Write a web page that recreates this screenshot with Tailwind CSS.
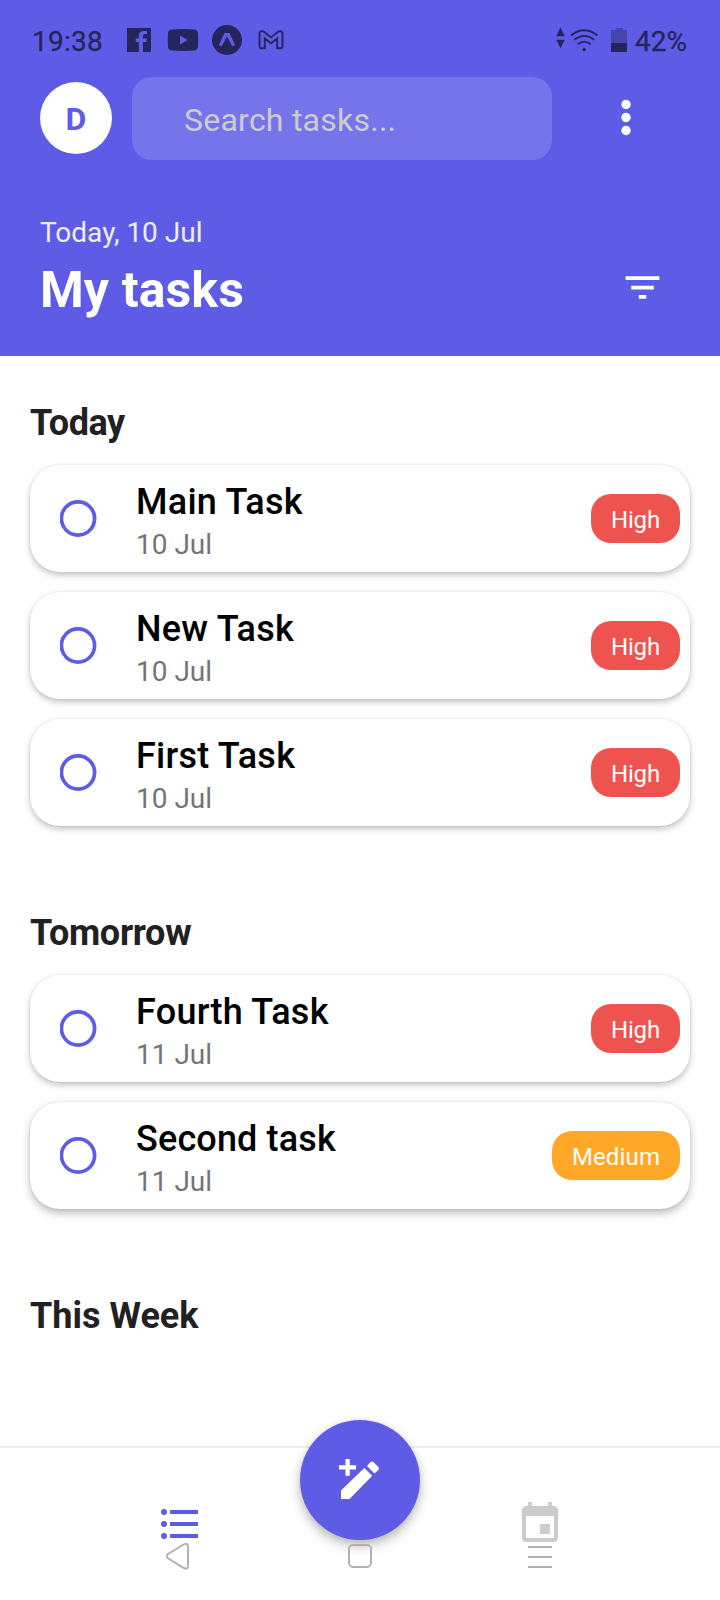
<!DOCTYPE html>
<html lang="en">
<head>
<meta charset="utf-8">
<title>My tasks</title>
<script src="https://cdn.jsdelivr.net/npm/@tailwindcss/browser@4"></script>
</head>
<body class="bg-white font-['Roboto',sans-serif]">
<svg class="hidden"><symbol id="ring" viewBox="0 0 37 37"><circle cx="18" cy="18.500" r="16.600" fill="none" stroke="#5e5ce6" stroke-width="3.700"/></symbol></svg>
<div class="relative flex h-[1600px] w-[720px] flex-col overflow-hidden bg-white">
  <header class="flex h-[356px] shrink-0 flex-col bg-[#5e5ce6]">
    <div class="flex h-[77px] shrink-0 items-start justify-between pt-[25px] pr-[33px] pl-[32px] text-[28px] leading-[33px] text-[#26245c]">
      <div class="flex items-start">
        <span class="w-[95px] tracking-[0.25px] [-webkit-text-stroke:0.3px_#26245c]">19:38</span>
        <svg class="mt-[-2px]" width="160" height="34" viewBox="127 23 160 34" fill="#26245c">
          <path d="M127 28h24v24h-8v-10h3.400l.6-3.600h-4v-2.300c0-1.400.7-2 2-2h2v-3h-3c-3.500 0-5.200 1.900-5.200 4.800v2.500h-3v3.600h3v10h-11.800z"/>
          <path fill-rule="evenodd" d="M172 29.400q11-.8 22 0q4 .3 4 4q.5 6.600 0 13.200q-.2 3.700-4 4q-11 .8-22 0q-3.800-.3-4-4q-.5-6.600 0-13.200q.2-3.700 4-4zM180 35.500v9l7.500-4.500z"/>
          <circle cx="227" cy="40" r="15"/>
          <path d="M224.500 33h5l5.500 12-2.500 1.500c-2-3-3.500-7-5.500-10-2 3-3.500 7-5.500 10L219 45z" fill="#5e5ce6"/>
          <path d="M261 48.200h3.800v-9.700l6.200 4.800 6.200-4.800v9.700h3.800q1.500 0 1.500-1.500V33.600c0-2.700-2.800-3-4.400-1.800L271 37.400l-7.100-5.600c-1.600-1.200-4.400-.9-4.400 1.800v13.100q0 1.500 1.500 1.500z" fill="none" stroke="#26245c" stroke-width="1.900"/>
        </svg>
      </div>
      <div class="flex items-start">
        <svg class="mt-[-2px]" width="79" height="34" viewBox="555 23 79 34" fill="#26245c">
          <path d="M560.500 27.500l4.300 8.700h-8.600zM556.200 39.800h8.600l-4.300 8.700z"/>
          <g fill="none" stroke="#26245c" stroke-width="1.800"><path d="M571 35.500q13.200-10.500 26.400 0M574.300 39.800q9.900-7.800 19.800 0M577.700 44.200q6.500-4.600 13 0"/></g>
          <circle cx="584.200" cy="49.500" r="1.700"/>
          <path d="M616 28h7v2h4v13h-16V30h5z" fill="#4744ae"/><path d="M611 43h16v9h-16z"/>
        </svg>
        <span class="w-[53px] pl-px [-webkit-text-stroke:0.3px_#26245c]">42%</span>
      </div>
    </div>
    <div class="flex h-[83px] shrink-0 items-center pl-10">
      <div class="mt-[-1px] flex size-[72px] items-center justify-center rounded-full bg-white pt-px text-[32px] leading-none font-bold text-[#5e5ce6]">D</div>
      <div class="ml-5 flex h-[83px] w-[420px] items-center rounded-[20px] bg-[#7674eb] pt-[2px] pl-[52px] text-[32px] tracking-[0.24px] text-[#cccccc]">Search tasks...</div>
      <svg class="mt-[-2px] ml-[62px]" width="24" height="40" viewBox="614 98 24 40" fill="#fff"><circle cx="626" cy="104.500" r="4.700"/><circle cx="626" cy="117.500" r="4.700"/><circle cx="626" cy="130.500" r="4.700"/></svg>
    </div>
    <div class="mt-[54px] flex items-center justify-between pr-[55px] pl-10">
      <div>
        <div class="text-[28px] leading-[38px] text-[#eeeeee]">Today, 10 Jul</div>
        <h1 class="text-[50px] leading-[76px] font-bold tracking-[0.1px] text-white">My tasks</h1>
      </div>
      <svg class="mt-[33px]" width="45" height="45" viewBox="0 0 24 24" fill="#fff"><path d="M6 13h12v-2H6M3 6v2h18V6M10 18h4v-2h-4v2z"/></svg>
    </div>
  </header>

  <main class="flex grow flex-col px-[30px]">
    <section class="h-[510px]">
      <h2 class="h-[109px] pt-[46px] text-[36px] leading-[42px] font-bold tracking-[-0.45px] text-[#212121]">Today</h2>
      <div class="flex flex-col gap-5">
        <article class="flex h-[107px] items-center rounded-[30px] bg-white pr-[10px] pl-[30px] shadow-[0_3px_6px_rgba(0,0,0,0.24),0_0_2px_rgba(0,0,0,0.1)]">
          <svg class="shrink-0" width="37" height="37"><use href="#ring"/></svg>
          <div class="ml-[39px] grow pt-[8px]"><div class="text-[36px] leading-[44px] font-medium tracking-[0.25px] text-black">Main Task</div><div class="text-[28px] leading-[42px] text-[#757575]">10 Jul</div></div>
          <span class="flex h-[49px] w-[89px] items-center justify-center rounded-[20px] bg-[#ef5350] pt-[2px] text-[24px] tracking-[-0.2px] text-white">High</span>
        </article>
        <article class="flex h-[107px] items-center rounded-[30px] bg-white pr-[10px] pl-[30px] shadow-[0_3px_6px_rgba(0,0,0,0.24),0_0_2px_rgba(0,0,0,0.1)]">
          <svg class="shrink-0" width="37" height="37"><use href="#ring"/></svg>
          <div class="ml-[39px] grow pt-[8px]"><div class="text-[36px] leading-[44px] font-medium tracking-[0.25px] text-black">New Task</div><div class="text-[28px] leading-[42px] text-[#757575]">10 Jul</div></div>
          <span class="flex h-[49px] w-[89px] items-center justify-center rounded-[20px] bg-[#ef5350] pt-[2px] text-[24px] tracking-[-0.2px] text-white">High</span>
        </article>
        <article class="flex h-[107px] items-center rounded-[30px] bg-white pr-[10px] pl-[30px] shadow-[0_3px_6px_rgba(0,0,0,0.24),0_0_2px_rgba(0,0,0,0.1)]">
          <svg class="shrink-0" width="37" height="37"><use href="#ring"/></svg>
          <div class="ml-[39px] grow pt-[8px]"><div class="text-[36px] leading-[44px] font-medium tracking-[0.25px] text-black">First Task</div><div class="text-[28px] leading-[42px] text-[#757575]">10 Jul</div></div>
          <span class="flex h-[49px] w-[89px] items-center justify-center rounded-[20px] bg-[#ef5350] pt-[2px] text-[24px] tracking-[-0.2px] text-white">High</span>
        </article>
      </div>
    </section>
    <section class="h-[383px]">
      <h2 class="h-[109px] pt-[46px] text-[36px] leading-[42px] font-bold tracking-[-0.3px] text-[#212121]">Tomorrow</h2>
      <div class="flex flex-col gap-5">
        <article class="flex h-[107px] items-center rounded-[30px] bg-white pr-[10px] pl-[30px] shadow-[0_3px_6px_rgba(0,0,0,0.24),0_0_2px_rgba(0,0,0,0.1)]">
          <svg class="shrink-0" width="37" height="37"><use href="#ring"/></svg>
          <div class="ml-[39px] grow pt-[8px]"><div class="text-[36px] leading-[44px] font-medium tracking-[0.25px] text-black">Fourth Task</div><div class="text-[28px] leading-[42px] text-[#757575]">11 Jul</div></div>
          <span class="flex h-[49px] w-[89px] items-center justify-center rounded-[20px] bg-[#ef5350] pt-[2px] text-[24px] tracking-[-0.2px] text-white">High</span>
        </article>
        <article class="flex h-[107px] items-center rounded-[30px] bg-white pr-[10px] pl-[30px] shadow-[0_4px_8px_rgba(0,0,0,0.27),0_0_2px_rgba(0,0,0,0.1)]">
          <svg class="shrink-0" width="37" height="37"><use href="#ring"/></svg>
          <div class="ml-[39px] grow pt-[8px]"><div class="text-[36px] leading-[44px] font-medium tracking-[0.15px] text-black">Second task</div><div class="text-[28px] leading-[42px] text-[#757575]">11 Jul</div></div>
          <span class="flex h-[49px] w-[128px] items-center justify-center rounded-[20px] bg-[#ffa726] pt-[2px] text-[24px] tracking-[0.15px] text-white">Medium</span>
        </article>
      </div>
    </section>
    <section>
      <h2 class="pt-[46px] text-[36px] leading-[42px] font-bold text-[#212121]">This Week</h2>
    </section>
  </main>

  <nav class="relative flex h-[154px] shrink-0 flex-col border-t-2 border-[#eeeeee] bg-white">
    <div class="flex justify-between pt-[52px] pr-[156px] pl-[156px]">
      <svg width="48" height="48" viewBox="0 0 24 24" fill="#5e5ce6"><path d="M7 5h14v2H7zM7 11h14v2H7zM7 17h14v2H7z"/><circle cx="4" cy="6" r="1.500"/><circle cx="4" cy="12" r="1.500"/><circle cx="4" cy="18" r="1.500"/></svg>
      <svg width="48" height="48" viewBox="0 0 24 24" fill="#cccccc"><path d="M17 12h-5v5h5v-5zM16 1v2H8V1H6v2H5c-1.110 0-1.990.9-1.990 2L3 19c0 1.100.89 2 2 2h14c1.100 0 2-.9 2-2V5c0-1.100-.9-2-2-2h-1V1h-2zm3 18H5V8h14v11z"/></svg>
    </div>
    <div class="absolute top-[-28px] left-[300px] flex size-[120px] items-center justify-center rounded-full bg-[#5e5ce6] shadow-[0_6px_12px_rgba(0,0,0,0.24),0_1px_6px_rgba(0,0,0,0.1)]">
      <svg width="60" height="60" viewBox="330 1450 60 60" fill="#fff"><path d="M345.500 1459h4.300v6.300h6.200v4.200h-6.200v6.300h-4.300v-6.300h-6.500v-4.200h6.500zM341 1490.500l23.300-22.500 7.900 7.800-22.700 23.200H341zM367 1466l3.600-3.900q1.400-1.400 2.800 0l5 5q1.400 1.400 0 2.800l-3.900 3.700z"/></svg>
    </div>
    <svg class="absolute top-[92px] left-[160px]" width="400" height="36" viewBox="160 1540 400 36" fill="none" stroke="#b0b0b0" stroke-width="1.900">
      <path d="M168 1554l15-9.200q5-2.600 5 2v19q0 4.200-4.500 2l-15.500-9.500q-2.500-2.200 0-4.300zM528 1547h24M528 1557h24M528 1567h24"/><rect x="349" y="1545" width="22" height="22" rx="4"/>
    </svg>
  </nav>
</div>
</body>
</html>
